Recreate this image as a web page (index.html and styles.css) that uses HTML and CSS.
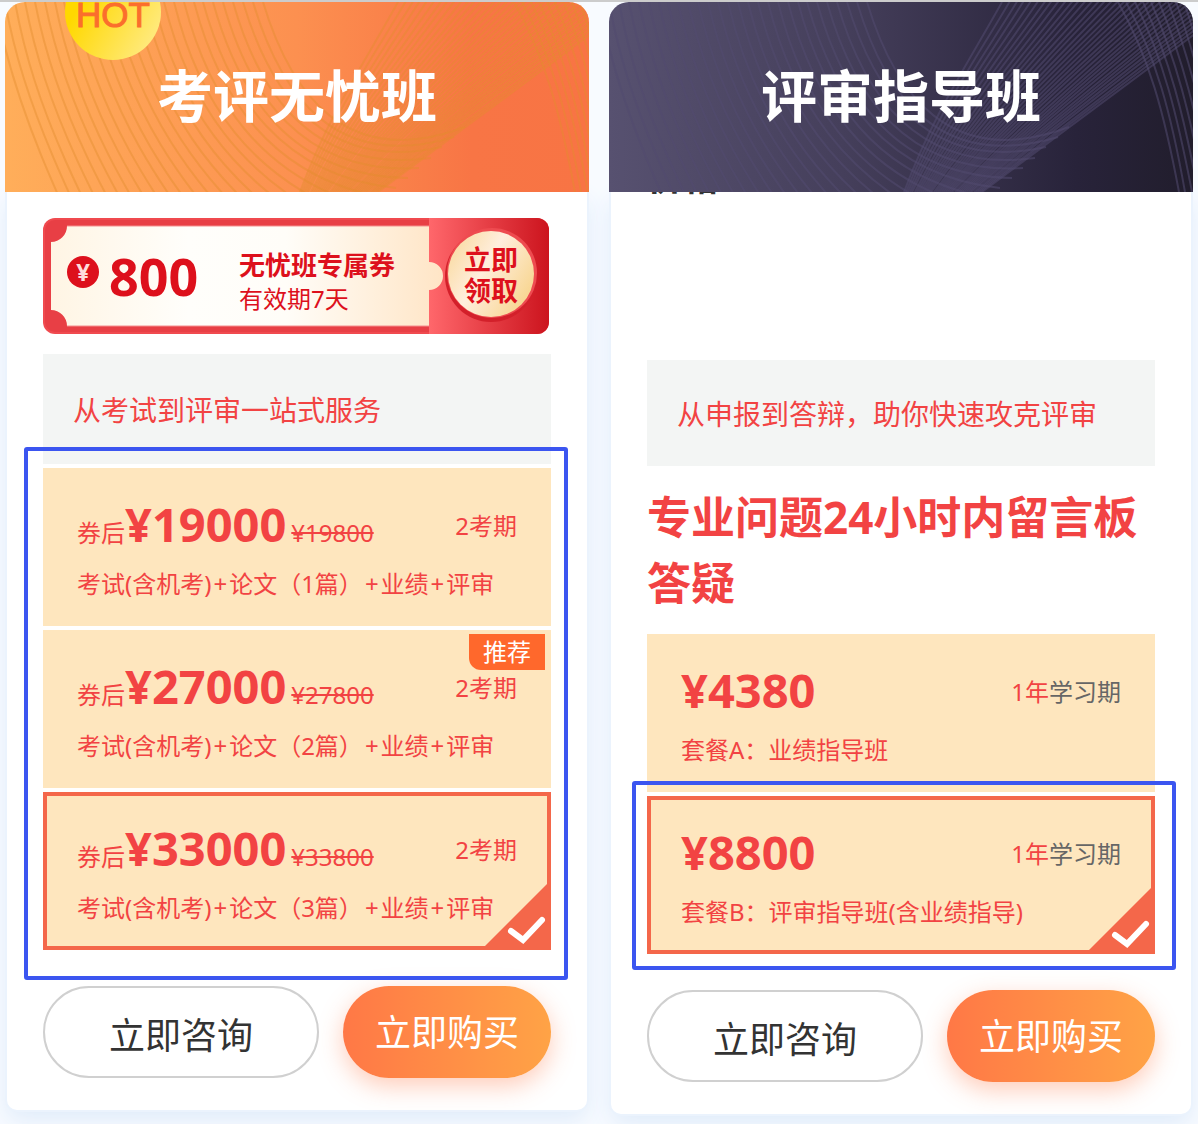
FILE: index.html
```html
<!DOCTYPE html>
<html lang="zh-CN">
<head>
<meta charset="utf-8">
<meta name="viewport" content="width=device-width, initial-scale=1">
<title>课程套餐</title>
<link rel="stylesheet" href="styles.css">
</head>
<body>
<main class="plans">
  <section class="plan">
    <header class="banner banner-orange">
      <svg class="waves" viewBox="0 0 584 190" preserveAspectRatio="none" aria-hidden="true"></svg>
      <span class="hot">HOT</span>
      <h2 class="banner-title">考评无忧班</h2>
    </header>
    <div class="plan-body">
      <div class="coupon">
        <svg class="coupon-art" viewBox="0 0 506 116" preserveAspectRatio="none" aria-hidden="true">
          <defs>
            <linearGradient id="paper"><stop offset="0" stop-color="#fff5e4"/><stop offset=".35" stop-color="#fffefb"/><stop offset=".6" stop-color="#fffdf8"/><stop offset="1" stop-color="#ffe5c6"/></linearGradient>
            <linearGradient id="stub"><stop offset="0" stop-color="#ff676b"/><stop offset="1" stop-color="#cc141e"/></linearGradient>
            <linearGradient id="seal" x2="1" y2=".6"><stop offset="0" stop-color="#f8d795"/><stop offset=".5" stop-color="#ffeedd"/><stop offset="1" stop-color="#f8d795"/></linearGradient>
          </defs>
          <rect width="506" height="116" rx="12" fill="#f04a4f"/>
          <rect x="2" y="2" width="440" height="112" rx="10" fill="#e83f45"/>
          <path d="M386 0h108a12 12 0 0 1 12 12v92a12 12 0 0 1-12 12H386z" fill="url(#stub)"/>
          <path d="M24 8H386V44a14 14 0 0 1 0 28V108H24A16 16 0 0 0 8 92V24A16 16 0 0 0 24 8z" fill="url(#paper)"/>
          <path d="M24 8H386M24 108H386" stroke="#f58f8e" fill="none"/>
          <circle cx="448" cy="58" r="46" fill="#d3202a"/>
          <circle cx="449" cy="55" r="45" fill="#ee4b50"/>
          <circle cx="448" cy="56" r="43" fill="url(#seal)"/>
          <circle cx="40" cy="54" r="16" fill="#dd101c"/>
        </svg>
        <span class="coupon-yen">¥</span>
        <strong class="coupon-value">800</strong>
        <div class="coupon-info"><b class="coupon-name">无忧班专属券</b><span class="coupon-date">有效期7天</span></div>
        <button class="coupon-get" type="button">立即<br>领取</button>
      </div>
      <p class="intro intro-tall">从考试到评审一站式服务</p>
      <div class="options">
        <label class="option"><input class="option-input" type="radio" name="exam">
          <span class="option-top"><span class="amount">券后<b class="price">¥19000</b><del class="old">¥19800</del></span><span class="term">2考期</span></span>
          <span class="option-desc">考试(含机考)<span class="plus">+</span>论文（1篇）<span class="plus">+</span>业绩<span class="plus">+</span>评审</span>
        </label>
        <label class="option"><input class="option-input" type="radio" name="exam">
          <span class="tag">推荐</span>
          <span class="option-top"><span class="amount">券后<b class="price">¥27000</b><del class="old">¥27800</del></span><span class="term">2考期</span></span>
          <span class="option-desc">考试(含机考)<span class="plus">+</span>论文（2篇）<span class="plus">+</span>业绩<span class="plus">+</span>评审</span>
        </label>
        <label class="option"><input class="option-input" type="radio" name="exam" checked>
          <span class="option-top"><span class="amount">券后<b class="price">¥33000</b><del class="old">¥33800</del></span><span class="term">2考期</span></span>
          <span class="option-desc">考试(含机考)<span class="plus">+</span>论文（3篇）<span class="plus">+</span>业绩<span class="plus">+</span>评审</span>
          <svg class="tick" viewBox="0 0 62 62" aria-hidden="true"><path d="M62 0V62H0z" fill="#f4674a"/><path d="M26 47l12 9 19-20" fill="none" stroke="#fff" stroke-width="6" stroke-linecap="round"/></svg>
        </label>
        <span class="frame frame-group"></span>
      </div>
      <div class="actions">
        <button class="btn btn-ask" type="button">立即咨询</button>
        <button class="btn btn-buy" type="button">立即购买</button>
      </div>
    </div>
  </section>

  <section class="plan">
    <header class="banner banner-dark">
      <svg class="waves" viewBox="0 0 584 190" preserveAspectRatio="none" aria-hidden="true"></svg>
      <h2 class="banner-title">评审指导班</h2>
    </header>
    <div class="plan-body plan-body-scrolled">
      <h3 class="section-name">价格</h3>
      <p class="intro">从申报到答辩，助你快速攻克评审</p>
      <h3 class="promise">专业问题24小时内留言板答疑</h3>
      <div class="options">
        <label class="option"><input class="option-input" type="radio" name="review">
          <span class="option-top"><b class="price">¥4380</b><span class="term">1年<span class="muted">学习期</span></span></span>
          <span class="option-desc">套餐A：业绩指导班</span>
        </label>
        <label class="option"><input class="option-input" type="radio" name="review" checked>
          <span class="option-top"><b class="price">¥8800</b><span class="term">1年<span class="muted">学习期</span></span></span>
          <span class="option-desc">套餐B：评审指导班(含业绩指导)</span>
          <svg class="tick" viewBox="0 0 62 62" aria-hidden="true"><path d="M62 0V62H0z" fill="#f4674a"/><path d="M26 47l12 9 19-20" fill="none" stroke="#fff" stroke-width="6" stroke-linecap="round"/></svg>
          <span class="frame frame-single"></span>
        </label>
      </div>
      <div class="actions">
        <button class="btn btn-ask" type="button">立即咨询</button>
        <button class="btn btn-buy" type="button">立即购买</button>
      </div>
    </div>
  </section>
</main>
<script src="waves.js"></script>
</body>
</html>
```
FILE: styles.css
```css
* { box-sizing: border-box; }

body {
  margin: 0;
  border-top: 2px solid #ccc;
  background: #f8fbff;
  color: #f24343;
  font: 24px/36px "Noto Sans", "Noto Sans CJK SC", sans-serif;
}

h2, h3, p { margin: 0; }

button { font-family: inherit; cursor: pointer; }

.plans {
  display: grid;
  grid-template-columns: 1fr 1fr;
  align-items: start;
  gap: 20px;
  padding: 0 5px 10px;
  overflow: hidden;
}

.plan { position: relative; }

.banner {
  position: relative;
  z-index: 1;
  display: flex;
  justify-content: center;
  align-items: center;
  height: 190px;
  padding-bottom: 4px;
  border-radius: 20px 20px 0 0;
  overflow: hidden;
  color: #fff;
}

.banner-orange {
  background: linear-gradient(90deg, #ffae5a, #fc9050 50%, #f87545 80%, #f87444);
  --wave: rgba(226, 140, 45, .42);
}

.banner-dark {
  background: linear-gradient(90deg, #575170, #453f5b 40%, #28233a 80%, #211d2c);
  --wave: rgba(82, 75, 112, .55);
}

.waves {
  position: absolute;
  inset: 0;
  width: 100%;
  height: 100%;
  fill: none;
  stroke: var(--wave);
  stroke-width: 2;
}

.banner-title {
  position: relative;
  font-size: 56px;
  line-height: 80px;
}

.hot {
  position: absolute;
  left: 60px;
  top: -38px;
  width: 96px;
  height: 96px;
  padding-top: 31px;
  border-radius: 50%;
  background: linear-gradient(120deg, #ffd800 25%, #ffe978 85%);
  color: #fb6e2c;
  font: 35px/40px "Liberation Sans", sans-serif;
  -webkit-text-stroke: 1px #fb6e2c;
  text-align: center;
}

.plan-body {
  margin: 0 2px;
  padding: 26px 36px 32px;
  border-radius: 0 0 10px 10px;
  background: #fff;
  box-shadow: 0 0 0 2px #ebf3fd, 0 10px 24px #dfebfa;
}

.plan-body-scrolled { padding-top: 0; }

.coupon {
  position: relative;
  display: flex;
  align-items: center;
  height: 116px;
  margin: 0 2px 20px 0;
  padding: 0 31px 0 24px;
  color: #dd101c;
}

.coupon-art {
  position: absolute;
  inset: 0;
  width: 100%;
  height: 100%;
}

.coupon-yen {
  position: relative;
  width: 32px;
  padding-bottom: 8px;
  color: #fdd;
  font-weight: 700;
  text-align: center;
}

.coupon-value {
  position: relative;
  width: 90px;
  margin: 0 40px 0 10px;
  font-size: 52px;
  line-height: 64px;
}

.coupon-info {
  position: relative;
  display: flex;
  flex-direction: column;
  padding-top: 12px;
  line-height: 34px;
}

.coupon-name { font-size: 26px; }

.coupon-get {
  position: relative;
  margin-left: auto;
  padding: 0 0 2px;
  border: 0;
  background: none;
  color: #dd101c;
  font-size: 27px;
  font-weight: 700;
  line-height: 31px;
}

.intro {
  padding: 36px 30px 34px;
  background: #f3f5f4;
  font-size: 28px;
}

.intro-tall {
  margin-bottom: 4px;
  padding: 38px 30px 36px;
}

.section-name {
  height: 200px;
  margin-top: -32px;
  color: #333;
  font-size: 36px;
  line-height: 36px;
}

.plan-body-scrolled::before {
  content: "";
  display: table;
}

.promise {
  padding: 18px 0;
  font-size: 44px;
  line-height: 66px;
}

.options {
  position: relative;
  display: grid;
  gap: 4px;
}

.option {
  position: relative;
  display: flex;
  flex-direction: column;
  height: 158px;
  padding: 18px 30px 0;
  border: 4px solid #fee6be;
  background: #fee6be;
}

.option:has(:checked) { border-color: #f4674a; }

.option-input {
  position: absolute;
  margin: 0;
  opacity: 0;
}

.option-top {
  display: flex;
  justify-content: space-between;
  align-items: center;
  height: 68px;
  margin-bottom: 8px;
}

.amount {
  display: flex;
  align-items: baseline;
}

.price {
  font-size: 47px;
  line-height: 64px;
}

.old { margin-left: 5px; }

.term { padding-top: 4px; }

.plus { margin: 0 2px; }

.muted { color: #666; }

.tag {
  position: absolute;
  top: 0;
  right: 2px;
  width: 76px;
  border-radius: 0 0 0 12px;
  background: #ff682c;
  color: #fff;
  text-align: center;
}

.tick {
  position: absolute;
  right: 0;
  bottom: 0;
  width: 62px;
}

.frame {
  position: absolute;
  border: 4px solid #3b55f0;
  border-radius: 3px;
  pointer-events: none;
}

.frame-group { inset: -21px -17px -30px -19px; }

.frame-single { inset: -19px -25px -20px -19px; }

.actions {
  display: grid;
  grid-template-columns: 276fr 208fr;
  gap: 24px;
  margin-top: 36px;
}

.btn {
  height: 92px;
  padding: 0 0 4px;
  border: 0;
  border-radius: 46px;
  font-size: 36px;
}

.btn-ask {
  padding: 2px 0 0;
  border: 2px solid #d0d0d0;
  background: #fff;
  color: #333;
}

.btn-buy {
  background: linear-gradient(90deg, #ff7846, #ffa346);
  box-shadow: 0 8px 24px rgba(255, 120, 70, .38);
  color: #fff;
}
```
FILE: waves.js
```js
// Each family blends evenly from its first curve to its last one.
const families = [
  { count: 28, from: [-10, 0, 10, 110, 50, 190, 150, 400], to: [258, 0, 285, 90, 340, 170, 460, 125] },
  { count: 38, from: [393, 0, 360, 60, 325, 110, 295, 190], to: [680, -38, 580, 36, 480, 110, 373, 190] },
  { count: 12, from: [509, 0, 540, 55, 555, 110, 570, 190], to: [600, 0, 615, 60, 628, 120, 640, 190] }
];

document.querySelectorAll(".waves").forEach(svg => {
  families.forEach(({ count, from, to }) => {
    for (let i = 0; i < count; i++) {
      const t = i / (count - 1);
      const p = from.map((v, k) => Math.round(v + (to[k] - v) * t));
      const path = document.createElementNS("http://www.w3.org/2000/svg", "path");
      path.setAttribute("d", `M${p[0]} ${p[1]}C${p.slice(2).join(" ")}`);
      svg.append(path);
    }
  });
});
```
